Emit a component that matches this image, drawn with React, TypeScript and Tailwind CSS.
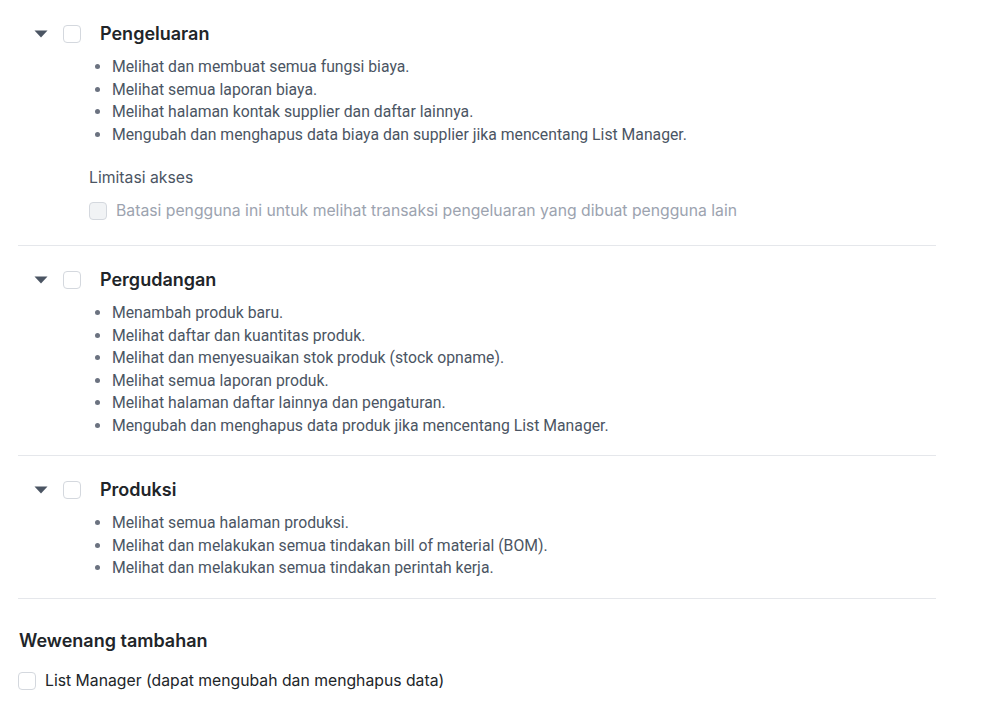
import React from "react"

type Section = {
  title: string
  items: string[]
  limit?: boolean
}

const sections: Section[] = [
  {
    title: "Pengeluaran",
    items: [
      "Melihat dan membuat semua fungsi biaya.",
      "Melihat semua laporan biaya.",
      "Melihat halaman kontak supplier dan daftar lainnya.",
      "Mengubah dan menghapus data biaya dan supplier jika mencentang List Manager.",
    ],
    limit: true,
  },
  {
    title: "Pergudangan",
    items: [
      "Menambah produk baru.",
      "Melihat daftar dan kuantitas produk.",
      "Melihat dan menyesuaikan stok produk (stock opname).",
      "Melihat semua laporan produk.",
      "Melihat halaman daftar lainnya dan pengaturan.",
      "Mengubah dan menghapus data produk jika mencentang List Manager.",
    ],
  },
  {
    title: "Produksi",
    items: [
      "Melihat semua halaman produksi.",
      "Melihat dan melakukan semua tindakan bill of material (BOM).",
      "Melihat dan melakukan semua tindakan perintah kerja.",
    ],
  },
]

function Caret() {
  return (
    <svg width="14" height="8" viewBox="0 0 14 8" className="shrink-0">
      <path d="M0.5 0.5 L13.5 0.5 L7 7.5 Z" fill="#4b5563" />
    </svg>
  )
}

function Box({ disabled }: { disabled?: boolean }) {
  return (
    <span
      className={
        disabled
          ? "block w-[18px] h-[18px] shrink-0 rounded-[4px] border border-[#d4d8de] bg-[#f1f3f5]"
          : "block w-[18px] h-[18px] shrink-0 rounded-[4px] border border-[#d4d8de] bg-white"
      }
    />
  )
}

function PermissionSection({ s }: { s: Section }) {
  return (
    <div className={s.limit ? "pt-[21px] pb-[24px] border-b border-[#e5e7eb]" : "pt-[21px] pb-[18px] border-b border-[#e5e7eb]"}>
      <div className="flex items-center h-6 pl-[16px] translate-y-[1px]">
        <Caret />
        <span className="ml-[15px]">
          <Box />
        </span>
        <span className="ml-[19px] text-[18px] leading-6 font-semibold text-[#212529] font-['Inter',sans-serif]">
          {s.title}
        </span>
      </div>
      <ul className="mt-[11px] pl-[94px] list-disc marker:text-[#6b7280] font-['Roboto',sans-serif] text-[15.75px] leading-[22.5px] text-[#4b5563]">
        {s.items.map((it) => (
          <li key={it}>{it}</li>
        ))}
      </ul>
      {s.limit && (
        <div className="pl-[71px] mt-[20px] font-['Inter',sans-serif]">
          <div className="text-[15.75px] leading-[22px] text-[#4b5563] translate-y-[1px]">Limitasi akses</div>
          <label className="mt-[11px] flex items-center gap-[9px] h-[22px] translate-y-[1px]">
            <Box disabled />
            <span className="text-[15.75px] text-[#9ca3af]">
              Batasi pengguna ini untuk melihat transaksi pengeluaran yang dibuat pengguna lain
            </span>
          </label>
        </div>
      )}
    </div>
  )
}

export default function App() {
  return (
    <div className="min-h-screen bg-white">
      <div className="w-[918px] ml-[18px]">
        {sections.map((s) => (
          <PermissionSection key={s.title} s={s} />
        ))}
        <div className="pt-[30px] font-['Inter',sans-serif]">
          <h3 className="text-[18px] leading-6 font-semibold text-[#212529] pl-px">Wewenang tambahan</h3>
          <label className="mt-[17px] flex items-center gap-[9px] h-[22px]">
            <Box />
            <span className="text-[15.75px] text-[#212529]">List Manager (dapat mengubah dan menghapus data)</span>
          </label>
        </div>
      </div>
    </div>
  )
}
